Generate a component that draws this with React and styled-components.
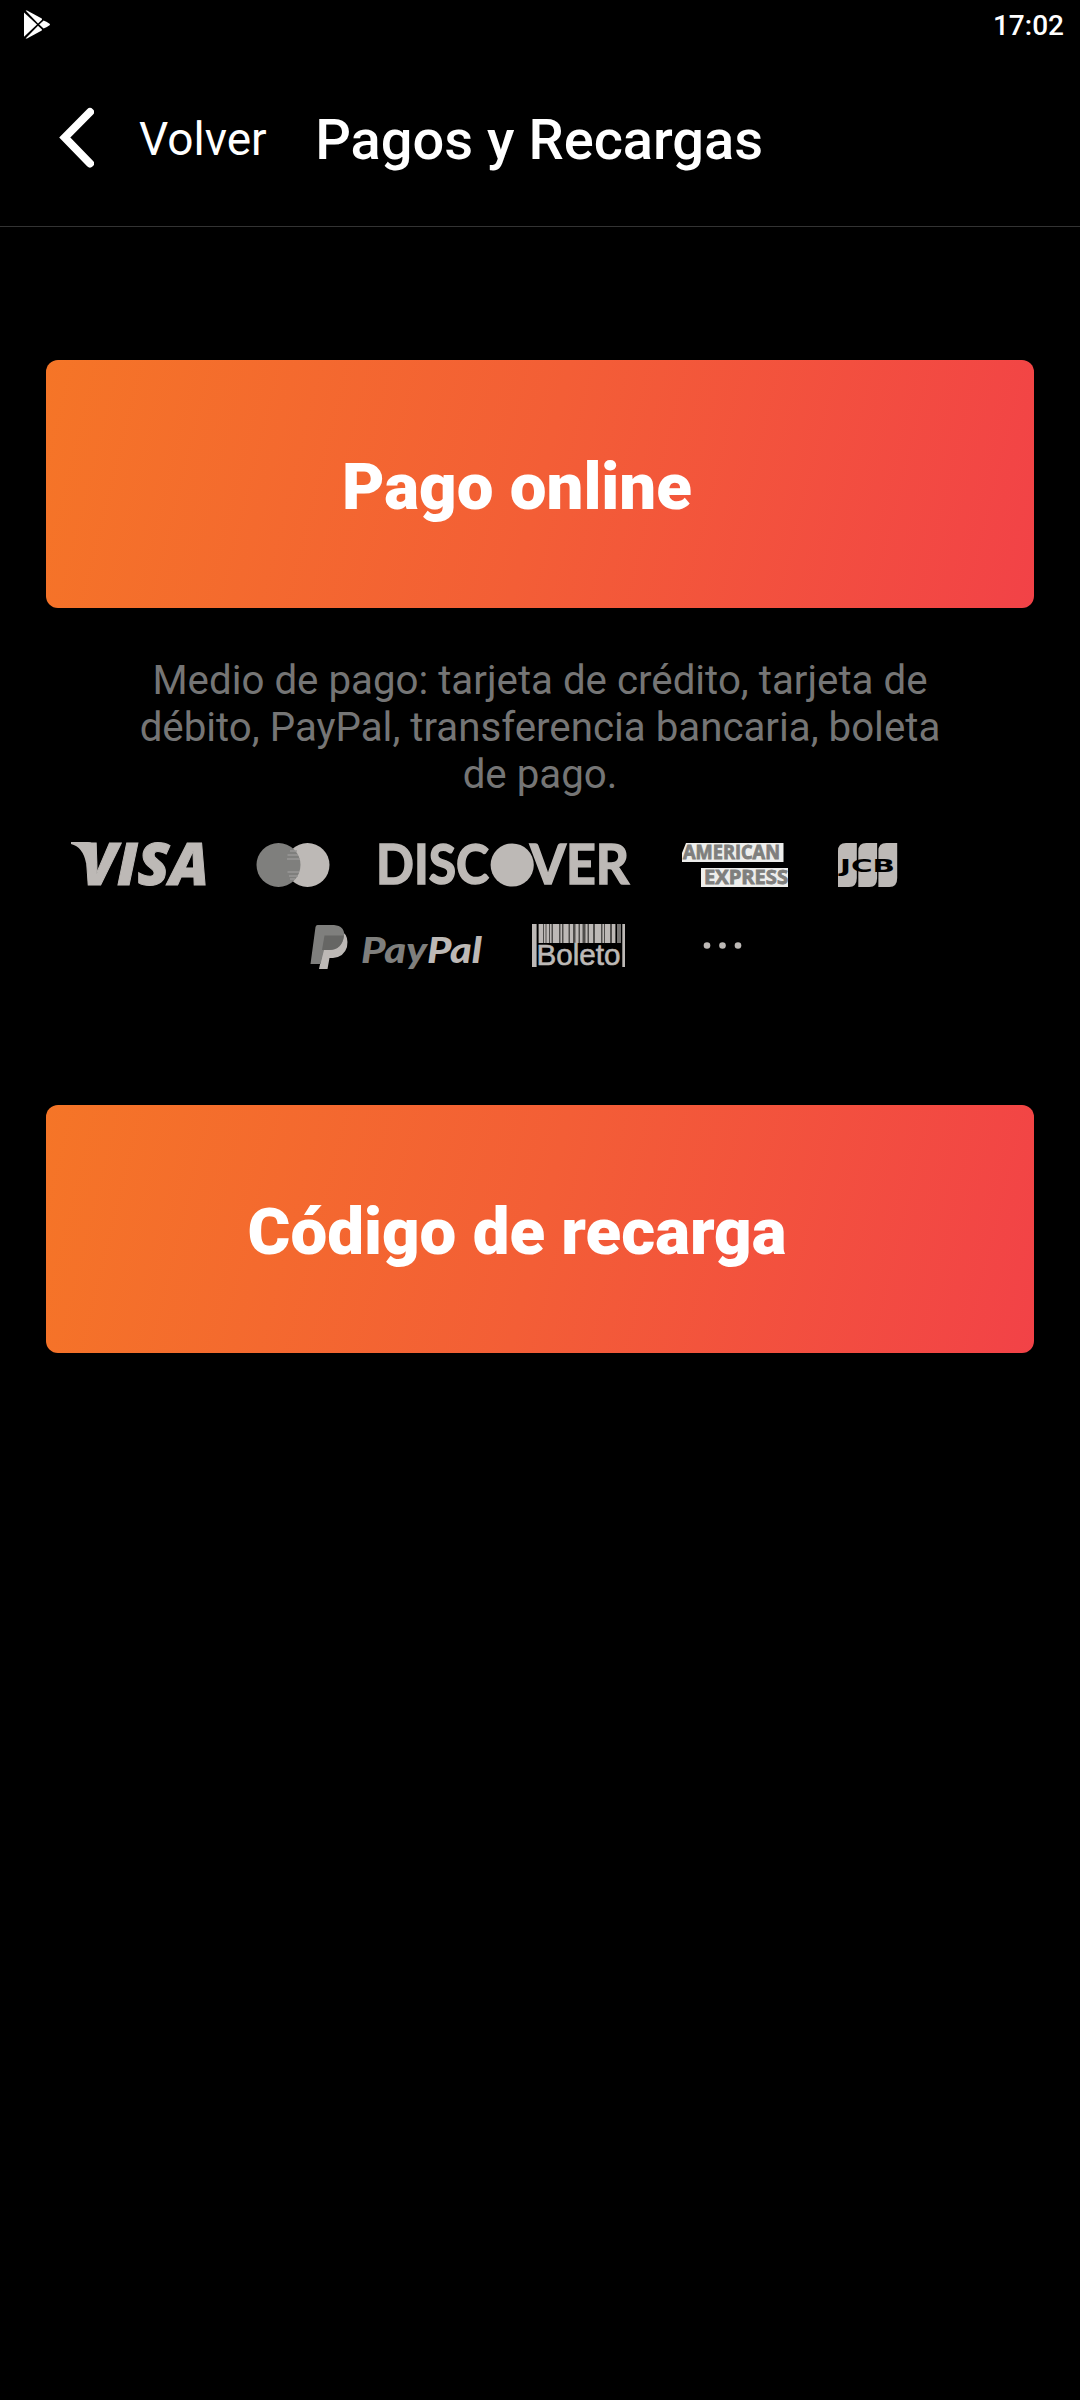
import React from 'react';
import styled, { createGlobalStyle } from 'styled-components';

const light = '#bdb9b6';
const dark = '#7f7f7d';

const PlayIcon = () => (
  <svg width="28" height="30" viewBox="0 0 28 30" fill="#fff">
    <path d="M1 2.5 L14 14.6 L1 26.8 Z" />
    <path d="M2.6 0.6 L4 0.6 L18.8 8.4 L19 9.8 L15 13.4 Z" />
    <path d="M2.6 28.6 L4 28.6 L18.8 20.6 L19 19.4 L15 15.8 Z" />
    <path d="M16.2 14.6 L20.6 10.6 Q27 13.4 27 14.6 Q27 15.8 20.6 18.6 Z" />
  </svg>
);

const BackIcon = () => (
  <svg width="36" height="62" viewBox="0 0 36 62">
    <path
      d="M32 5 L6.8 30.5 L32 56.5"
      fill="none"
      stroke="#fff"
      strokeWidth="8"
      strokeLinecap="round"
      strokeLinejoin="miter"
    />
  </svg>
);

const Visa = () => (
  <Logo width="136" height="46" viewBox="0 0 136 46">
    <path d="M0 1 H17 Q22 1 23 6 L26 22 L15 22 Q12 6 0 3 Z" fill={light} />
    <LogoText x="10" y="43.5" size="58" weight={800} stroke={1} italic family="Open Sans" textLength="128">
      VISA
    </LogoText>
  </Logo>
);

const Mastercard = () => (
  <Logo width="74" height="46" viewBox="0 0 74 46">
    <circle cx="50.5" cy="24" r="22" fill={light} />
    <circle cx="21.5" cy="24" r="22" fill={dark} />
    <path
      d="M33 10 H40 M30.5 14 H41 M30 18 H43 M30.5 31 H42 M32 35 H41 M33 38 H38"
      stroke="#999896"
      strokeWidth="1.4"
    />
  </Logo>
);

const Discover = () => (
  <Logo width="252" height="46" viewBox="0 0 252 46">
    <LogoText x="-5" y="42.5" size="55" stroke={1.6} family="Lato" textLength="113">
      DISC
    </LogoText>
    <circle cx="131.2" cy="24" r="21.6" fill={light} />
    <LogoText x="149" y="42.5" size="55" stroke={1.6} family="Lato" textLength="99">
      VER
    </LogoText>
  </Logo>
);

const Amex = () => (
  <Logo width="106" height="46" viewBox="0 0 106 46">
    <path d="M3 2 H100.5 V21 H-1 V12 Z M18 27 H105 V46 H18 Z" fill="#eeeeec" />
    <LogoText x="0" y="18.3" size="19" fill={dark} stroke={0.8} family="Open Sans" textLength="97">
      AMERICAN
    </LogoText>
    <LogoText x="21" y="43.3" size="19" fill={dark} stroke={0.8} family="Open Sans" textLength="84">
      EXPRESS
    </LogoText>
  </Logo>
);

const Jcb = () => (
  <Logo width="60" height="46" viewBox="0 0 60 46">
    {[-1, 19.3, 39.4].map(x => (
      <path
        key={x}
        d={`M${x} 46 V10 Q${x} 2 ${x + 8} 2 H${x + 18.8} V37 Q${x + 18.8} 46 ${x + 11} 46 Z`}
        fill={light}
      />
    ))}
    <LogoText x="1" y="31" size="18.5" fill="#000" family="DejaVu Sans" textLength="55">
      JCB
    </LogoText>
  </Logo>
);

const Paypal = () => (
  <Logo width="172" height="48" viewBox="0 0 172 48">
    <path
      d="M17 9 H33 Q39 14 37 24 Q34 34 23 35 L19.5 35 L17.5 46 H9 Z"
      fill={light}
    />
    <path
      d="M7.5 2 H24 Q35 3 34 13 Q32 27 19 27 H14 L10.5 41 H0.5 L5.5 4 Q6 2 7.5 2 Z"
      fill={dark}
    />
    <path d="M14.5 12.5 H34 Q32 27 19 27 H12 Z" fill="#666664" />
    <LogoText x="51" y="40" size="36" fill={dark} italic weight={900} family="Lato" textLength="66">
      Pay
    </LogoText>
    <LogoText x="117" y="40" size="36" italic weight={900} family="Lato" textLength="55">
      Pal
    </LogoText>
  </Logo>
);

const bars = [
  [7, 4], [12, 1.5], [14.5, 2.5], [18, 1.5], [21, 6], [28.5, 1.5], [31.5, 5],
  [38, 3], [43.5, 3], [48, 2.5], [53.5, 2], [57, 4], [63, 6], [70.5, 1.5],
  [73, 5], [80, 3],
];

const Boleto = () => (
  <Logo width="94" height="46" viewBox="0 0 94 46">
    <rect x="0" y="1" width="4.6" height="43" fill={light} />
    <rect x="6" y="1" width="78" height="19" fill="#4f4d4b" />
    {bars.map(([x, w]) => (
      <rect key={x} x={x} y="1" width={w} height="19" fill={light} />
    ))}
    <rect x="85" y="1" width="4" height="19" fill="#777573" />
    <rect x="90.3" y="1" width="2.7" height="43" fill={light} />
    <LogoText x="4.5" y="42" size="29" weight={400} stroke={0.6} family="Liberation Sans" textLength="84">
      Boleto
    </LogoText>
  </Logo>
);

const More = () => (
  <MoreLogo width="40" height="46" viewBox="0 0 40 46">
    {[4, 19.5, 35].map(x => (
      <circle key={x} cx={x} cy="22.5" r="3.3" fill={light} />
    ))}
  </MoreLogo>
);

export default () => (
  <Screen>
    <GlobalStyle />
    <StatusBar>
      <PlayIcon />
      <Clock>17:02</Clock>
    </StatusBar>
    <Header>
      <BackIcon />
      <BackLabel>Volver</BackLabel>
      <Title>Pagos y Recargas</Title>
    </Header>
    <Content>
      <PayButton>Pago online</PayButton>
      <Description>
        Medio de pago: tarjeta de crédito, tarjeta de débito, PayPal,
        transferencia bancaria, boleta de pago.
      </Description>
      <Logos>
        <LogoRow start={25}>
          <Visa />
          <Mastercard />
          <Discover />
          <Amex />
          <Jcb />
        </LogoRow>
        <LogoRow start={264}>
          <Paypal />
          <Boleto />
          <More />
        </LogoRow>
      </Logos>
      <PayButton>Código de recarga</PayButton>
    </Content>
  </Screen>
);

const GlobalStyle = createGlobalStyle`
  body {
    margin: 0;
    background: #000;
  }
`;

const Screen = styled.div`
  width: 1080px;
  height: 2400px;
  display: flex;
  flex-direction: column;
  background: #000;
  color: #fff;
  font-family: Roboto, sans-serif;
`;

const StatusBar = styled.div`
  height: 50px;
  box-sizing: border-box;
  padding: 0 16px 1px 23px;
  display: flex;
  align-items: center;
  justify-content: space-between;
`;
const Clock = styled.span`
  padding-top: 1px;
  font-size: 28px;
  font-weight: 500;
`;

const Header = styled.header`
  height: 177px;
  box-sizing: border-box;
  padding: 0 58px;
  display: flex;
  align-items: center;
  border-bottom: 1px solid #333;
`;
const BackLabel = styled.span`
  margin-left: 45px;
  padding-top: 2px;
  font-size: 46px;
`;
const Title = styled.h1`
  margin: 0 0 0 48.5px;
  padding-top: 4px;
  font-size: 56px;
  font-weight: 500;
`;

const Content = styled.main`
  padding: 133px 46px 0;
  display: flex;
  flex-direction: column;
`;
const PayButton = styled.button`
  height: 248px;
  padding: 5px 46px 0 0;
  border: 0;
  border-radius: 12px;
  background: linear-gradient(104deg, #f57527 0%, #f35e36 50%, #f24247 100%);
  color: #fff;
  font-family: inherit;
  font-size: 65.4px;
  font-weight: 900;
`;
const Description = styled.p`
  width: 820px;
  margin: 49px auto 0;
  color: #757575;
  font-size: 40.25px;
  line-height: 47px;
  text-align: center;
`;

const Logos = styled.div`
  height: 307px;
  padding-top: 43px;
  box-sizing: border-box;
`;
const LogoRow = styled.div`
  display: flex;
  gap: 50px;
  padding-left: ${props => props.start}px;
  margin-bottom: 36px;
`;
const Logo = styled.svg`
  flex: none;
  overflow: visible;
`;
const MoreLogo = styled(Logo)`
  margin-left: 27px;
`;
const LogoText = styled.text
  .withConfig({
    shouldForwardProp: prop =>
      !['size', 'weight', 'italic', 'family', 'stroke', 'fill'].includes(prop),
  })
  .attrs({ lengthAdjust: 'spacingAndGlyphs' })`
  font-family: '${props => props.family}', sans-serif;
  font-size: ${props => props.size}px;
  font-weight: ${props => props.weight || 700};
  font-style: ${props => (props.italic ? 'italic' : 'normal')};
  fill: ${props => props.fill || light};
  stroke: ${props => props.fill || light};
  stroke-width: ${props => props.stroke || 0};
`;
